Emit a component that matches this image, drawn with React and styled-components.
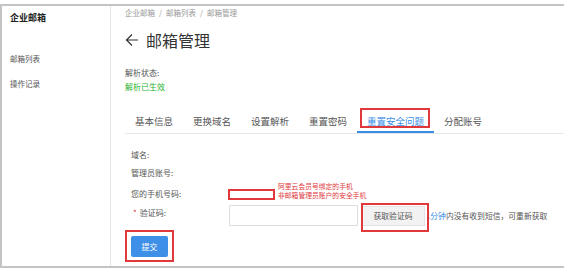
import styled, { createGlobalStyle } from "styled-components";

const GlobalStyle = createGlobalStyle`
  body {
    margin: 0;
    background: #fff;
    font-family: "Noto Sans CJK SC", "Noto Sans", sans-serif;
    color: #333;
  }
`;

const Frame = styled.div`
  margin-top: 4px;
  height: 260px;
  border-top: 2px solid #c4c4c4;
  border-left: 2px solid #c4c4c4;
  border-bottom: 2px solid #c4c4c4;
  display: flex;
  overflow: hidden;
`;

const Sidebar = styled.aside`
  width: 109px;
  flex-shrink: 0;
  border-right: 1px solid #e6e6e6;
  padding: 5px 0 0 8px;
  box-sizing: border-box;
`;

const SideTitle = styled.div`
  font-size: 9px;
  font-weight: 700;
  line-height: 14px;
  color: #222;
  margin-bottom: 28px;
`;

const SideItem = styled.div`
  font-size: 7.5px;
  line-height: 12px;
  color: #555;
  margin-bottom: 13px;
`;

const Main = styled.main`
  flex: 1;
  padding-left: 14px;
  min-width: 0;
`;

const Crumbs = styled.div`
  margin-top: 1px;
  font-size: 7.5px;
  line-height: 12px;
  color: #999;
  span {
    margin: 0 4px;
  }
`;

const Title = styled.h1`
  margin: 10px 0 0;
  height: 22px;
  display: flex;
  align-items: center;
  gap: 7px;
  font-size: 16px;
  font-weight: 400;
  color: #333;
`;

const Status = styled.div`
  margin-top: ${(p) => p.$top || 0}px;
  font-size: 8px;
  line-height: 14px;
  color: ${(p) => (p.$ok ? "#29b32e" : "#555")};
`;

const TabBar = styled.div`
  margin-top: 16px;
  display: flex;
  border-bottom: 1px solid #e8e8e8;
`;

const Tab = styled.div`
  position: relative;
  height: 23px;
  box-sizing: border-box;
  padding: 2px 10px 0;
  line-height: 19px;
  font-size: 9.5px;
  color: ${(p) => (p.$active ? "#3a8ee6" : "#555")};
  border-bottom: 2px solid ${(p) => (p.$active ? "#3a8ee6" : "transparent")};
  white-space: nowrap;

  ${(p) =>
    p.$marked &&
    `
    &::after {
      content: "";
      position: absolute;
      top: -2px;
      left: 3px;
      right: 4px;
      bottom: 3px;
      border: 2px solid #e0383b;
    }
  `}
`;

const Form = styled.div`
  margin-top: 12px;
  padding-left: 6px;
`;

const Row = styled.div`
  display: flex;
  align-items: ${(p) => p.$align || "center"};
  min-height: 18px;
  margin-top: ${(p) => p.$gap || 0}px;
`;

const Label = styled.div`
  width: 98px;
  flex-shrink: 0;
  font-size: 8px;
  line-height: ${(p) => p.$lh || 12}px;
  color: #555;
`;

const Star = styled.span`
  color: #e0383b;
  margin: 0 3px 0 2px;
`;

const Field = styled.div`
  display: flex;
  align-items: ${(p) => p.$align || "center"};
`;

const PhoneBox = styled.div`
  width: 43px;
  height: 7px;
  margin-left: -1px;
  border: 2px solid #e0383b;
`;

const Note = styled.div`
  margin-left: 3px;
  font-size: 6.8px;
  line-height: 9px;
  color: #e0383b;
  white-space: nowrap;
`;

const Input = styled.input`
  width: 129px;
  height: 21px;
  box-sizing: border-box;
  border: 1px solid #dcdcdc;
  border-radius: 1px;
  outline: none;
  margin: 0;
`;

const Marked = styled.div`
  position: relative;
  display: flex;
  &::after {
    content: "";
    position: absolute;
    top: ${(p) => p.$t}px;
    left: ${(p) => p.$l}px;
    right: ${(p) => p.$r}px;
    bottom: ${(p) => p.$b}px;
    border: 2px solid #e0383b;
    pointer-events: none;
  }
`;

const CodeButton = styled.button`
  width: 64px;
  height: 20px;
  margin-left: 3px;
  border: 1px solid #e4e4e4;
  background: #f2f2f2;
  font-family: inherit;
  font-size: 7.8px;
  color: #555;
  padding: 0;
`;

const Hint = styled.div`
  margin-left: 1px;
  font-size: 7.8px;
  line-height: 21px;
  color: #555;
  white-space: nowrap;
  b {
    font-weight: 400;
    color: #3a8ee6;
  }
`;

const Submit = styled.button`
  width: 37px;
  height: 21px;
  border: none;
  border-radius: 2px;
  background: #3d8fe8;
  color: #fff;
  font-family: inherit;
  font-size: 8px;
  padding: 0;
`;

const SubmitRow = styled.div`
  margin-top: 10px;
  display: flex;
`;

const tabs = ["基本信息", "更换域名", "设置解析", "重置密码", "重置安全问题", "分配账号"];

export default function App() {
  return (
    <>
      <GlobalStyle />
      <Frame>
        <Sidebar>
          <SideTitle>企业邮箱</SideTitle>
          <SideItem>邮箱列表</SideItem>
          <SideItem>操作记录</SideItem>
        </Sidebar>
        <Main>
          <Crumbs>
            企业邮箱<span>/</span>邮箱列表<span>/</span>邮箱管理
          </Crumbs>
          <Title>
            <svg width="14" height="14" viewBox="0 0 14 14">
              <path d="M13 7H1.5M7 1.5L1.5 7 7 12.5" fill="none" stroke="#333" strokeWidth="1.2" />
            </svg>
            邮箱管理
          </Title>
          <Status $top={15}>解析状态:</Status>
          <Status $ok>解析已生效</Status>
          <TabBar>
            {tabs.map((t, i) => (
              <Tab key={t} $active={i === 4} $marked={i === 4}>
                {t}
              </Tab>
            ))}
          </TabBar>
          <Form>
            <Row>
              <Label>域名:</Label>
            </Row>
            <Row>
              <Label>管理员账号:</Label>
            </Row>
            <Row $align="flex-end">
              <Label>您的手机号码:</Label>
              <Field $align="flex-end">
                <PhoneBox />
                <Note>
                  阿里云会员号绑定的手机
                  <br />
                  非邮箱管理员账户的安全手机
                </Note>
              </Field>
            </Row>
            <Row $align="flex-start" $gap={5}>
              <Label $lh={16}>
                <Star>*</Star>验证码:
              </Label>
              <Field>
                <Input />
                <Marked $t={-3} $l={3} $r={-4} $b={-6}>
                  <CodeButton>获取验证码</CodeButton>
                </Marked>
                <Hint>
                  <b>1分钟</b>内没有收到短信，可重新获取
                </Hint>
              </Field>
            </Row>
            <SubmitRow>
              <Marked $t={-6} $l={-6} $r={-6} $b={-5}>
                <Submit>提交</Submit>
              </Marked>
            </SubmitRow>
          </Form>
        </Main>
      </Frame>
    </>
  );
}
